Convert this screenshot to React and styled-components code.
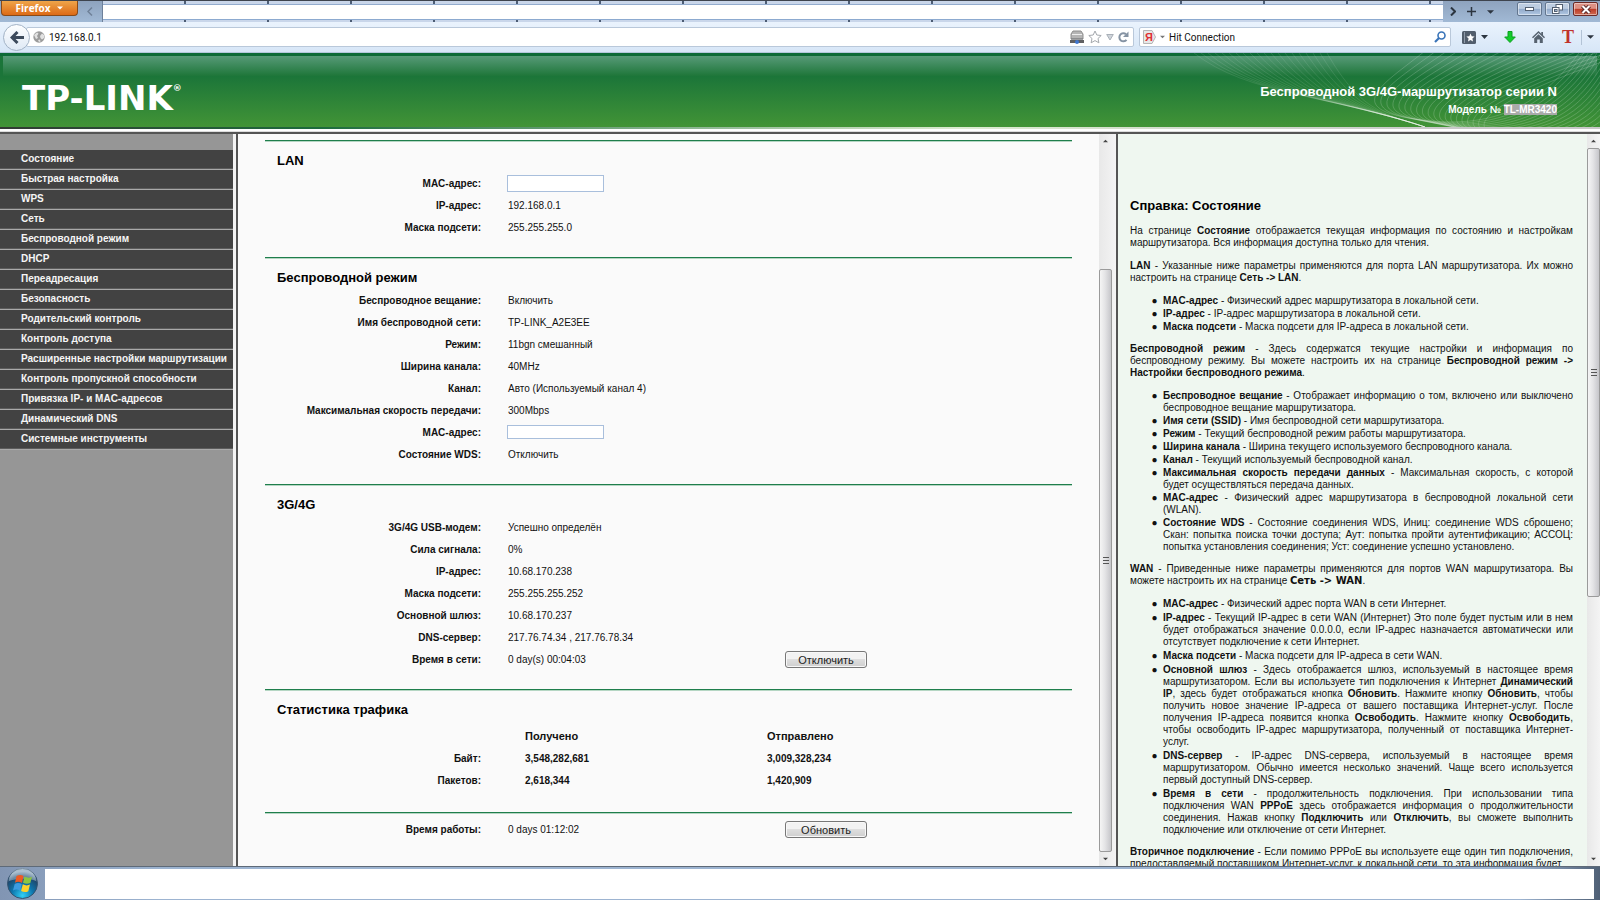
import React from "react";
import styled, { createGlobalStyle } from "styled-components";

const GlobalStyle = createGlobalStyle`
  * {
    box-sizing: border-box;
  }

  body {
    margin: 0;
    font-family: "Liberation Sans", Arial, sans-serif;
    font-size: 10px;
    color: #111;
  }
`;

//  Styled components
const Page = styled.div`
  display: flex;
  flex-direction: column;
  height: 100vh;
  overflow: hidden;
`;

/* browser chrome */
const TitleBar = styled.div`
  display: flex;
  height: 22px;
  border-top: 1px solid #3e444e;
  background: linear-gradient(#8ea3be, #a1b9d5);
`;

const FirefoxButton = styled.button`
  display: flex;
  align-items: center;
  justify-content: center;
  gap: 7px;
  width: 77px;
  height: 15px;
  margin-left: 1px;
  padding: 0;
  border: 1px solid #8a4a17;
  border-top: 0;
  border-radius: 0 0 4px 4px;
  background: linear-gradient(#efa54a, #dd6a16);
  color: #fff;
  font: bold 10px "Open Sans", sans-serif;
  line-height: 14px;
`;

const TabScroll = styled.button`
  display: flex;
  align-items: center;
  justify-content: center;
  width: ${props => props.$width || 24}px;
  padding: 0;
  border: 0;
  background: none;
  color: ${props => props.$color || "#2c3540"};
`;

const TabStrip = styled.div`
  flex: 1;
  padding: 3px 0 2px;
  border-left: 1px solid #6d809a;
  background: repeating-linear-gradient(
    90deg,
    #c9d6ea 0,
    #c9d6ea 81px,
    #4c5c74 81px,
    #4c5c74 83px
  );
`;

const TabFill = styled.div`
  height: 100%;
  border-top: 1px solid #93acce;
  border-bottom: 1px solid #8caad0;
  background: #fff;
`;

const WindowButtons = styled.div`
  display: flex;
  gap: 3px;
  padding: 1px 2px 0 17px;
`;

const WindowButton = styled.button`
  display: flex;
  align-items: center;
  justify-content: center;
  width: 25px;
  height: 14px;
  padding: 0;
  border: 1px solid ${props => (props.$close ? "#6c2a26" : "#62768f")};
  border-radius: 2px;
  box-shadow: inset 0 0 0 1px rgba(255, 255, 255, 0.45);
  background: ${props =>
    props.$close
      ? "linear-gradient(#dd9184 45%, #bd3b26 50%, #cf6a50)"
      : "linear-gradient(#bdcde1 45%, #92aaca 50%, #b0c7e2)"};
`;

const NavBar = styled.div`
  display: flex;
  align-items: center;
  height: 31px;
  padding: 0 6px 0 3px;
  border-bottom: 1px solid #b4c6dc;
  background: linear-gradient(#eaf3fd, #d7e6f7);
`;

const BackButton = styled.button`
  display: flex;
  align-items: center;
  justify-content: center;
  z-index: 1;
  width: 27px;
  height: 27px;
  padding: 0;
  border: 1px solid #a3b3c6;
  border-radius: 50%;
  background: linear-gradient(#fdfeff, #dfe9f5);
`;

const FieldBox = styled.div`
  display: flex;
  align-items: center;
  gap: 4px;
  height: 20px;
  border: 1px solid #b9c8da;
  border-radius: 2px;
  background: #fff;
`;

const UrlBox = styled(FieldBox)`
  flex: 1;
  margin-left: -4px;
  padding: 0 4px 0 6px;
`;

const SearchBox = styled(FieldBox)`
  width: 312px;
  margin-left: 5px;
  padding: 0 4px 0 3px;
`;

const ChromeInput = styled.input`
  flex: 1;
  min-width: 0;
  padding: 0;
  border: 0;
  outline: 0;
  background: none;
  color: #111;
  font: 10px Roboto, "Noto Sans", sans-serif;
`;

const IconButton = styled.button`
  display: flex;
  align-items: center;
  padding: 0;
  border: 0;
  background: none;
`;

const ToolIcons = styled.div`
  display: flex;
  align-items: center;
  gap: 16px;
  margin-left: 11px;
`;

const MoreButton = styled(IconButton)`
  height: 15px;
  margin-left: 6px;
  padding-left: 5px;
  border-left: 1px solid #b3c3d6;
`;

/* router page */
const Banner = styled.header`
  position: relative;
  display: flex;
  align-items: center;
  justify-content: space-between;
  height: 74px;
  padding: 9px 43px 0 22px;
  border-top: 3px solid #0d6a37;
  background: linear-gradient(#1b7539 28%, #429436);
  color: #fff;
`;

const Gloss = styled.div`
  position: absolute;
  top: 0;
  right: 3px;
  left: 3px;
  height: 20px;
  background: linear-gradient(#579a78, #1e7639);
`;

const Waves = styled.svg`
  position: absolute;
  top: -3px;
  right: 0;
  width: 420px;
  height: 74px;
`;

const Logo = styled.div`
  position: relative;
  display: flex;
  align-items: flex-start;
  padding-top: 4px;
  font: bold 34px "DejaVu Sans", sans-serif;
  line-height: 32px;

  sup {
    font-size: 9px;
    line-height: 12px;
  }
`;

const Product = styled.div`
  position: relative;
  padding-top: 6px;
  font-weight: bold;
  text-align: right;

  h1 {
    margin: 0 0 4px;
    font-size: 13px;
    line-height: 16px;
  }

  mark {
    background: #a9aaa9;
    color: #fff;
  }
`;

const BannerEdge = styled.div`
  height: 5px;
  border-bottom: 1px solid #dcdcdc;
  background: linear-gradient(rgba(255, 255, 255, 0) 2px, #fff 2px),
    linear-gradient(90deg, #333a33, #1d6b3c 20%, #dcebd0 60%, #c9c9c9 90%);
`;

const Frames = styled.div`
  display: flex;
  flex: 1;
  min-height: 0;
  border-top: 2px solid #555;
`;

const Sidebar = styled.nav`
  flex: 0 0 238px;
  padding-top: 16px;
  border-right: 2px solid #555;
  box-shadow: inset -3px 0 #f4f4f4;
  background: #969696;

  ul {
    margin: 0 3px 0 0;
    padding: 0;
    list-style: none;
  }
`;

const MenuLink = styled.a`
  display: block;
  height: 20px;
  padding-left: 21px;
  border-bottom: 1px solid #a9a9a9;
  box-shadow: inset 0 -1px #5c5c5c;
  background: #424242;
  color: #f5f5f5;
  font-weight: bold;
  line-height: 18px;
  text-decoration: none;
`;

const Content = styled.main`
  flex: 1;
  min-width: 0;
  padding: 6px 27px 0;
  overflow: hidden;
  background: #fafafa;
`;

const Section = styled.section`
  padding-bottom: 19px;
  border-top: 1px solid #1f7e4c;
  box-shadow: inset 0 1px #b5d6c3;
`;

const Title = styled.h2`
  margin: 0;
  padding: 12px 0 3px 12px;
  color: #000;
  font-size: 13px;
  line-height: 16px;
`;

const DataTable = styled.table`
  width: 100%;
  margin: ${props => props.$margin || "0"};
  border-collapse: collapse;
  table-layout: fixed;

  tr {
    height: 22px;
  }

  th,
  td {
    padding: 0;
    text-align: left;
  }

  th:first-child,
  td:first-child {
    width: 216px;
    text-align: right;
  }

  td + td,
  th + td {
    padding-left: 27px;
  }
`;

const StatsTable = styled(DataTable)`
  font-weight: bold;

  thead th {
    font-size: 11px;
  }

  th + th,
  th + td,
  td + td,
  td + th {
    padding-left: 44px;
  }

  td + th + th,
  th + td + td {
    width: 349px;
  }
`;

const ActionCell = styled.td`
  width: 287px;
  line-height: 0;

  && {
    padding-left: 0;
  }
`;

const MacInput = styled.input`
  display: block;
  width: 97px;
  height: ${props => (props.$short ? 14 : 17)}px;
  margin-left: -1px;
  border: 1px solid #a9bfdc;
  background: #fff;
`;

const PushButton = styled.button`
  width: 82px;
  height: 17px;
  padding: 0;
  border: 1px solid #777;
  border-radius: 3px;
  box-shadow: inset 0 0 0 1px #f8f8f8;
  background: linear-gradient(#f2f2f2 45%, #dedede 50%, #cfcfcf);
  color: #222;
  font: 11px "Liberation Sans", Arial, sans-serif;
  line-height: 17px;
`;

const Help = styled.aside`
  flex: 0 0 469px;
  padding: 64px 14px 0 12px;
  overflow: hidden;
  background: #eff7f0;
  text-align: justify;

  h2 {
    margin: 0 0 11px;
    color: #000;
    font-size: 13px;
    line-height: 16px;
  }

  p {
    margin: 0 0 11px;
    line-height: 12px;
  }
`;

const HelpList = styled.ul`
  margin: 0 0 10px;
  padding-left: 33px;
  list-style-type: "●\\00a0\\00a0";

  li {
    margin-bottom: ${props => (props.$loose ? 2 : 1)}px;
    line-height: 12px;
  }
`;

const HeavyText = styled.b`
  font-family: "DejaVu Sans", sans-serif;
`;

const ScrollBar = styled.div`
  display: flex;
  flex: 0 0 ${props => props.$width}px;
  flex-direction: column;
  align-items: center;
  padding-right: ${props => (props.$divided ? 4 : 0)}px;
  border-right: ${props => (props.$divided ? "2px solid #555" : "0")};
  background: linear-gradient(90deg, #e8e8e8, #f4f4f4);
`;

const ScrollArrow = styled.button`
  display: flex;
  align-items: center;
  justify-content: center;
  width: 100%;
  height: 14px;
  padding: 0;
  border: 0;
  background: none;
`;

const ScrollSpace = styled.div`
  flex: ${props => props.$grow} 0 0;
`;

const ScrollThumb = styled.div`
  display: flex;
  flex: ${props => props.$grow} 0 0;
  align-items: center;
  justify-content: center;
  width: 100%;
  border: 1px solid #9a9a9a;
  border-radius: 2px;
  background: linear-gradient(90deg, #f5f5f5, #e4e4e6 45%, #c6c6ca);
`;

const TaskBar = styled.footer`
  display: flex;
  height: 34px;
  padding-right: 6px;
  border-top: 1px solid #5e6a78;
  background: linear-gradient(90deg, #8195b3, #9db4d1 10%, #9db4d1 95%, #4f6076);
`;

const StartButton = styled.button`
  width: 45px;
  padding: 0;
  border: 0;
  background: none;
  line-height: 0;
`;

const TaskFill = styled.div`
  flex: 1;
  margin: 2px 0 1px;
  background: #fff;
`;

//  End Styled Component

function Caret({ color = "#2c3540", up, width = 7 }) {
  return (
    <svg width={width} height="4" viewBox="0 0 8 4">
      <path d={up ? "M0 4h8L4 0z" : "M0 0h8L4 4z"} fill={color} />
    </svg>
  );
}

function HeaderWaves() {
  const lines = Array.from({ length: 20 }, (_, i) => i);

  return (
    <Waves viewBox="0 0 420 74" fill="none" stroke="#fff" aria-hidden="true">
      <g strokeOpacity="0.1">
        {lines.map(i => (
          <path
            key={i}
            d={`M${14 + i * 7} 0C${68 + i * 6} ${42 + i} ${150 + i * 3} ${42 +
              i} 245 74`}
          />
        ))}
      </g>
      <g strokeOpacity="0.18">
        {lines.map(i => (
          <path
            key={i}
            d={`M${245 + i * 11} -2C${205 + i * 8} 30 ${160 + i * 5} ${55 +
              i} ${235 + i * 5} ${66 + i}S${370 + i * 3} ${60 + i} 424 ${i * 7 -
              40}`}
          />
        ))}
      </g>
    </Waves>
  );
}

function StartOrb() {
  return (
    <svg width="31" height="31" viewBox="0 0 31 31">
      <defs>
        <radialGradient id="orb" cx="0.5" cy="0.9" r="0.8">
          <stop offset="0" stopColor="#31d0f5" />
          <stop offset="0.45" stopColor="#0d76ad" />
          <stop offset="0.8" stopColor="#1d4a70" />
          <stop offset="1" stopColor="#7e9db6" />
        </radialGradient>
      </defs>
      <circle cx="15.5" cy="15.5" r="15" fill="url(#orb)" stroke="#35536f" />
      <path d="M2 13a13.5 13 0 0 1 27 0c-7-3-18-3-27 0z" fill="#fff" opacity="0.35" />
      <path d="M9.5 8c2.5-1.5 5-1.5 7 0l-1.5 7c-2.5-1.5-5-1.5-7-.2z" fill="#ee5a24" />
      <path d="M17.5 8.5c2.5 1.5 5 1.5 7.5.2L23.3 15c-2.5 1.2-4.8 1-7.3-.2z" fill="#8cc63f" />
      <path d="M7.7 16c2.3-1.5 4.7-1.3 7 0l-1.7 6.7c-2.2-1.5-4.7-1.5-7-.2z" fill="#3d9be0" />
      <path d="M15.8 16.3c2.4 1.3 4.7 1.5 7.2.3l-1.7 6.6c-2.5 1.3-5 1-7.2-.3z" fill="#fcd12a" />
    </svg>
  );
}

function Browser() {
  return (
    <>
      <TitleBar>
        <FirefoxButton>
          Firefox <Caret color="#fff" width={6} />
        </FirefoxButton>
        <TabScroll $color="#6f8198" aria-label="Tabs left">
          <svg width="6" height="9" viewBox="0 0 6 9" fill="none" stroke="currentColor" strokeWidth="1.5">
            <path d="M5 .5l-4 4 4 4" />
          </svg>
        </TabScroll>
        <TabStrip>
          <TabFill />
        </TabStrip>
        <TabScroll $width={19} aria-label="Tabs right">
          <svg width="6" height="9" viewBox="0 0 6 9" fill="none" stroke="currentColor" strokeWidth="2">
            <path d="M1 .5l4 4-4 4" />
          </svg>
        </TabScroll>
        <TabScroll $width={19} aria-label="New tab">
          <svg width="9" height="9" viewBox="0 0 9 9" stroke="currentColor" strokeWidth="1.5">
            <path d="M4.5 0v9M0 4.5h9" />
          </svg>
        </TabScroll>
        <TabScroll $width={19} aria-label="All tabs">
          <Caret />
        </TabScroll>
        <WindowButtons>
          <WindowButton aria-label="Minimize">
            <svg width="9" height="4" viewBox="0 0 9 4">
              <rect x="0.5" y="0.5" width="8" height="3" fill="#fff" stroke="#525f70" />
            </svg>
          </WindowButton>
          <WindowButton aria-label="Restore">
            <svg width="11" height="10" viewBox="0 0 11 10" fill="#fff" stroke="#525f70">
              <rect x="4" y="0.5" width="6.5" height="5.5" />
              <rect x="0.5" y="3.5" width="6.5" height="6" />
              <rect x="2.5" y="5.5" width="2.5" height="2" fill="#9ab0cc" />
            </svg>
          </WindowButton>
          <WindowButton $close aria-label="Close">
            <svg width="10" height="9" viewBox="0 0 10 9">
              <path d="M1.5 1l7 7m0-7l-7 7" stroke="#5c2a2a" strokeWidth="4" />
              <path d="M1.5 1l7 7m0-7l-7 7" stroke="#fff" strokeWidth="2" />
            </svg>
          </WindowButton>
        </WindowButtons>
      </TitleBar>
      <NavBar>
        <BackButton aria-label="Back">
          <svg width="14" height="13" viewBox="0 0 14 13" fill="none" stroke="#3c4a5c" strokeWidth="3">
            <path d="M7.5 1L2 6.5 7.5 12M2.5 6.5H14" />
          </svg>
        </BackButton>
        <UrlBox>
          <svg width="12" height="12" viewBox="0 0 12 12">
            <circle cx="6" cy="6" r="5.7" fill="#9b9b9b" />
            <path d="M1 4l3-2.5 1.5 1L4 5l1 2-2 1zM7 5l2-2.5 2 1.5v3L9 8.5 7.5 7zM5 9l2-.5.5 2L6 11z" fill="#e2e2e2" />
          </svg>
          <ChromeInput defaultValue="192.168.0.1" aria-label="Address" />
          <svg width="14" height="14" viewBox="0 0 14 14">
            <path d="M3 1h8l2 3v5H1V4z" fill="#b5b5b5" stroke="#8e8e8e" />
            <path d="M2 4.5h10" stroke="#eee" />
            <path d="M0 10h14v3H0z" fill="#5f6062" />
            <path d="M1 9h12" stroke="#77797c" />
            <circle cx="7" cy="12" r="2" fill="#3f76d0" />
          </svg>
          <IconButton aria-label="Bookmark">
            <svg width="14" height="14" viewBox="0 0 14 14">
              <path d="M7 1l1.8 4 4.4.5-3.2 3 .9 4.3L7 10.6l-3.9 2.2.9-4.3-3.2-3L5.2 5z" fill="#fff" stroke="#a4a8ad" />
            </svg>
          </IconButton>
          <IconButton aria-label="History">
            <svg width="8" height="7" viewBox="0 0 8 7">
              <path d="M.7.5h6.6L4 6z" fill="#cfd4da" stroke="#a9b0b8" />
            </svg>
          </IconButton>
          <IconButton aria-label="Reload">
            <svg width="11" height="12" viewBox="0 0 11 12" fill="none">
              <path d="M8.5 8.8A4 4 0 1 1 8 3.3" stroke="#8593a3" strokeWidth="2" />
              <path d="M10.5.5v5.5H5z" fill="#8593a3" />
            </svg>
          </IconButton>
        </UrlBox>
        <SearchBox>
          <svg width="13" height="14" viewBox="0 0 13 14">
            <path d="M.5.5H9l3.5 6.5L9 13.5H.5z" fill="#e7e7e7" stroke="#b5b5b5" />
            <text x="2" y="11" fill="#e03030" fontFamily="Liberation Sans, sans-serif" fontSize="11" fontWeight="bold">
              Я
            </text>
          </svg>
          <Caret color="#777" width={5} />
          <ChromeInput defaultValue="Hit Connection" aria-label="Search" />
          <IconButton aria-label="Find">
            <svg width="12" height="12" viewBox="0 0 12 12" fill="none" stroke="#3a74b8">
              <circle cx="7.5" cy="4.5" r="3.5" strokeWidth="1.6" />
              <path d="M5 7l-4 4" strokeWidth="2.2" />
            </svg>
          </IconButton>
        </SearchBox>
        <ToolIcons>
          <IconButton aria-label="Bookmarks">
            <svg width="14" height="13" viewBox="0 0 14 13">
              <rect width="14" height="13" rx="1.5" fill="#515d6c" />
              <path d="M2.5 1v11" stroke="#8e9aa8" />
              <path d="M8.5 2.5l1.2 2.7 2.9.3-2.2 2 .6 2.9-2.5-1.5L6 10.4l.6-2.9-2.2-2 2.9-.3z" fill="#fff" />
            </svg>
            <svg width="12" height="4" viewBox="0 0 12 4">
              <path d="M5 0h7L8.5 4z" fill="#2c3540" />
            </svg>
          </IconButton>
          <IconButton aria-label="Downloads">
            <svg width="12" height="12" viewBox="0 0 12 12">
              <path d="M4 .5h4V6h3.3L6 11.5.7 6H4z" fill="#14cc2c" stroke="#0c9f20" />
            </svg>
          </IconButton>
          <IconButton aria-label="Home">
            <svg width="13" height="12" viewBox="0 0 13 12" fill="#56626f">
              <path d="M6.5 0L0 6.3l1 1 5.5-5.2L12 7.3l1-1-2-2V1H9.3v1.7z" />
              <path d="M6.5 3.2L2.2 7.3V12h3V8.5h2.6V12h3V7.3z" />
            </svg>
          </IconButton>
          <IconButton aria-label="Text tool">
            <svg width="14" height="20" viewBox="0 0 14 20">
              <text x="1" y="16" fill="#c0322b" fontFamily="Liberation Serif, serif" fontSize="18" fontWeight="bold">
                T
              </text>
            </svg>
          </IconButton>
        </ToolIcons>
        <MoreButton aria-label="More">
          <Caret width={7} />
        </MoreButton>
      </NavBar>
    </>
  );
}

function Scroll({ width, divided, before, thumb, after }) {
  return (
    <ScrollBar $width={width} $divided={divided}>
      <ScrollArrow aria-label="Up">
        <Caret color="#444" width={5} up />
      </ScrollArrow>
      <ScrollSpace $grow={before} />
      <ScrollThumb $grow={thumb}>
        <svg width="6" height="7" viewBox="0 0 6 7" stroke="#555">
          <path d="M0 .5h6M0 3.5h6M0 6.5h6" />
        </svg>
      </ScrollThumb>
      <ScrollSpace $grow={after} />
      <ScrollArrow aria-label="Down">
        <Caret color="#444" width={5} />
      </ScrollArrow>
    </ScrollBar>
  );
}

const menu = [
  "Состояние",
  "Быстрая настройка",
  "WPS",
  "Сеть",
  "Беспроводной режим",
  "DHCP",
  "Переадресация",
  "Безопасность",
  "Родительский контроль",
  "Контроль доступа",
  "Расширенные настройки маршрутизации",
  "Контроль пропускной способности",
  "Привязка IP- и MAC-адресов",
  "Динамический DNS",
  "Системные инструменты"
];

const lan = [
  { label: "MAC-адрес:", input: "lan-mac" },
  { label: "IP-адрес:", value: "192.168.0.1" },
  { label: "Маска подсети:", value: "255.255.255.0" }
];

const wireless = [
  { label: "Беспроводное вещание:", value: "Включить" },
  { label: "Имя беспроводной сети:", value: "TP-LINK_A2E3EE" },
  { label: "Режим:", value: "11bgn смешанный" },
  { label: "Ширина канала:", value: "40MHz" },
  { label: "Канал:", value: "Авто (Используемый канал 4)" },
  { label: "Максимальная скорость передачи:", value: "300Mbps" },
  { label: "MAC-адрес:", input: "wlan-mac", short: true },
  { label: "Состояние WDS:", value: "Отключить" }
];

const modem = [
  { label: "3G/4G USB-модем:", value: "Успешно определён" },
  { label: "Сила сигнала:", value: "0%" },
  { label: "IP-адрес:", value: "10.68.170.238" },
  { label: "Маска подсети:", value: "255.255.255.252" },
  { label: "Основной шлюз:", value: "10.68.170.237" },
  { label: "DNS-сервер:", value: "217.76.74.34 , 217.76.78.34" },
  { label: "Время в сети:", value: "0 day(s) 00:04:03", action: "Отключить" }
];

const uptime = [
  { label: "Время работы:", value: "0 days 01:12:02", action: "Обновить" }
];

function Rows({ rows, margin }) {
  return (
    <DataTable $margin={margin}>
      <tbody>
        {rows.map(row => (
          <tr key={row.label}>
            <th scope="row">
              {row.input ? (
                <label htmlFor={row.input}>{row.label}</label>
              ) : (
                row.label
              )}
            </th>
            <td>
              {row.input ? (
                <MacInput id={row.input} type="text" $short={row.short} />
              ) : (
                row.value
              )}
            </td>
            <ActionCell>
              {row.action && <PushButton>{row.action}</PushButton>}
            </ActionCell>
          </tr>
        ))}
      </tbody>
    </DataTable>
  );
}

function Status() {
  return (
    <Content>
      <Section>
        <Title>LAN</Title>
        <Rows rows={lan} />
      </Section>
      <Section>
        <Title>Беспроводной режим</Title>
        <Rows rows={wireless} />
      </Section>
      <Section>
        <Title>3G/4G</Title>
        <Rows rows={modem} />
      </Section>
      <Section>
        <Title>Статистика трафика</Title>
        <StatsTable $margin="4px 0 2px">
          <thead>
            <tr>
              <td />
              <th scope="col">Получено</th>
              <th scope="col">Отправлено</th>
            </tr>
          </thead>
          <tbody>
            <tr>
              <th scope="row">Байт:</th>
              <td>3,548,282,681</td>
              <td>3,009,328,234</td>
            </tr>
            <tr>
              <th scope="row">Пакетов:</th>
              <td>2,618,344</td>
              <td>1,420,909</td>
            </tr>
          </tbody>
        </StatsTable>
      </Section>
      <Section>
        <Rows rows={uptime} margin="5px 0 0" />
      </Section>
    </Content>
  );
}

function HelpText() {
  return (
    <Help>
      <h2>Справка: Состояние</h2>
      <p>
        На странице <b>Состояние</b> отображается текущая информация по
        состоянию и настройкам маршрутизатора. Вся информация доступна только
        для чтения.
      </p>
      <p>
        <b>LAN</b> - Указанные ниже параметры применяются для порта LAN
        маршрутизатора. Их можно настроить на странице <b>Сеть -&gt; LAN</b>.
      </p>
      <HelpList>
        <li>
          <b>MAC-адрес</b> - Физический адрес маршрутизатора в локальной сети.
        </li>
        <li>
          <b>IP-адрес</b> - IP-адрес маршрутизатора в локальной сети.
        </li>
        <li>
          <b>Маска подсети</b> - Маска подсети для IP-адреса в локальной сети.
        </li>
      </HelpList>
      <p>
        <b>Беспроводной режим</b> - Здесь содержатся текущие настройки и
        информация по беспроводному режиму. Вы можете настроить их на странице{" "}
        <b>Беспроводной режим -&gt; Настройки беспроводного режима</b>.
      </p>
      <HelpList>
        <li>
          <b>Беспроводное вещание</b> - Отображает информацию о том, включено
          или выключено беспроводное вещание маршрутизатора.
        </li>
        <li>
          <b>Имя сети (SSID)</b> - Имя беспроводной сети маршрутизатора.
        </li>
        <li>
          <b>Режим</b> - Текущий беспроводной режим работы маршрутизатора.
        </li>
        <li>
          <b>Ширина канала</b> - Ширина текущего используемого беспроводного
          канала.
        </li>
        <li>
          <b>Канал</b> - Текущий используемый беспроводной канал.
        </li>
        <li>
          <b>Максимальная скорость передачи данных</b> - Максимальная скорость,
          с которой будет осуществляться передача данных.
        </li>
        <li>
          <b>MAC-адрес</b> - Физический адрес маршрутизатора в беспроводной
          локальной сети (WLAN).
        </li>
        <li>
          <b>Состояние WDS</b> - Состояние соединения WDS, Иниц: соединение WDS
          сброшено; Скан: попытка поиска точки доступа; Аут: попытка пройти
          аутентификацию; АССОЦ: попытка установления соединения; Уст:
          соединение успешно установлено.
        </li>
      </HelpList>
      <p>
        <b>WAN</b> - Приведенные ниже параметры применяются для портов WAN
        маршрутизатора. Вы можете настроить их на странице{" "}
        <HeavyText>Сеть -&gt; WAN</HeavyText>.
      </p>
      <HelpList $loose>
        <li>
          <b>MAC-адрес</b> - Физический адрес порта WAN в сети Интернет.
        </li>
        <li>
          <b>IP-адрес</b> - Текущий IP-адрес в сети WAN (Интернет) Это поле
          будет пустым или в нем будет отображаться значение 0.0.0.0, если
          IP-адрес назначается автоматически или отсутствует подключение к сети
          Интернет.
        </li>
        <li>
          <b>Маска подсети</b> - Маска подсети для IP-адреса в сети WAN.
        </li>
        <li>
          <b>Основной шлюз</b> - Здесь отображается шлюз, используемый в
          настоящее время маршрутизатором. Если вы используете тип подключения к
          Интернет <b>Динамический IP</b>, здесь будет отображаться кнопка{" "}
          <b>Обновить</b>. Нажмите кнопку <b>Обновить</b>, чтобы получить новое
          значение IP-адреса от вашего поставщика Интернет-услуг. После
          получения IP-адреса появится кнопка <b>Освободить</b>. Нажмите кнопку{" "}
          <b>Освободить</b>, чтобы освободить IP-адрес маршрутизатора,
          полученный от поставщика Интернет-услуг.
        </li>
        <li>
          <b>DNS-сервер</b> - IP-адрес DNS-сервера, используемый в настоящее
          время маршрутизатором. Обычно имеется несколько значений. Чаще всего
          используется первый доступный DNS-сервер.
        </li>
        <li>
          <b>Время в сети</b> - продолжительность подключения. При использовании
          типа подключения WAN <b>PPPoE</b> здесь отображается информация о
          продолжительности соединения. Нажав кнопку <b>Подключить</b> или{" "}
          <b>Отключить</b>, вы сможете выполнить подключение или отключение от
          сети Интернет.
        </li>
      </HelpList>
      <p>
        <b>Вторичное подключение</b> - Если помимо PPPoE вы используете еще один
        тип подключения, предоставляемый поставщиком Интернет-услуг, к локальной
        сети, то эта информация будет
      </p>
    </Help>
  );
}

function App() {
  return (
    <Page>
      <GlobalStyle />
      <Browser />
      <Banner>
        <Gloss />
        <HeaderWaves />
        <Logo>
          TP-LINK<sup>®</sup>
        </Logo>
        <Product>
          <h1>Беспроводной 3G/4G-маршрутизатор серии N</h1>
          Модель № <mark>TL-MR3420</mark>
        </Product>
      </Banner>
      <BannerEdge />
      <Frames>
        <Sidebar>
          <ul>
            {menu.map(item => (
              <li key={item}>
                <MenuLink href="#">{item}</MenuLink>
              </li>
            ))}
          </ul>
        </Sidebar>
        <Status />
        <Scroll width={19} divided before={121} thumb={583} after={0} />
        <HelpText />
        <Scroll width={13} before={0} thumb={448} after={256} />
      </Frames>
      <TaskBar>
        <StartButton aria-label="Start">
          <StartOrb />
        </StartButton>
        <TaskFill />
      </TaskBar>
    </Page>
  );
}

export default App;
